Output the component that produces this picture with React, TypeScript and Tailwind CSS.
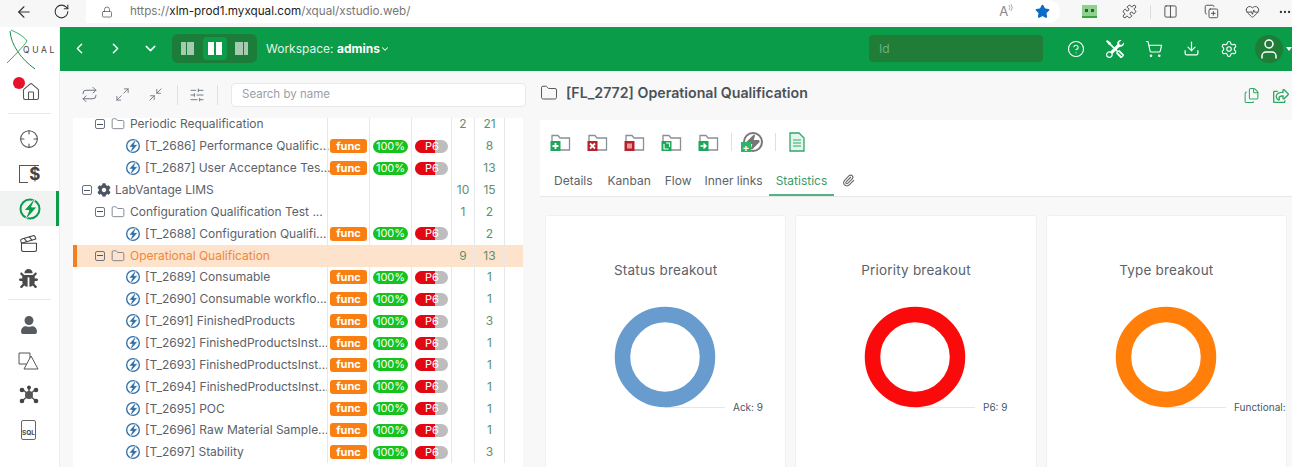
import {
  ArrowLeft,
  ChevronDown,
  ChevronLeft,
  ChevronRight,
  CircleHelp,
  Clapperboard,
  Download,
  Files,
  Folder,
  Home,
  Lock,
  Maximize2,
  Minimize2,
  MoreHorizontal,
  Paperclip,
  Puzzle,
  Repeat,
  RotateCw,
  Settings,
  ShoppingCart,
  SlidersHorizontal,
  Star,
  User,
  Columns2,
  CopyPlus,
  HeartPulse,
  Zap,
  Crosshair,
} from "lucide-react";
import { BsTools } from "react-icons/bs";
import { FaBug, FaCog, FaRegShareSquare, FaUser } from "react-icons/fa";

type Row = {
  name: string;
  level: 0 | 1 | 2;
  c1?: string;
  c2?: string;
  selected?: boolean;
};

const rows: Row[] = [
  { name: "Periodic Requalification", level: 1, c1: "2", c2: "21" },
  { name: "[T_2686] Performance Qualific...", level: 2, c2: "8" },
  { name: "[T_2687] User Acceptance Tes...", level: 2, c2: "13" },
  { name: "LabVantage LIMS", level: 0, c1: "10", c2: "15" },
  { name: "Configuration Qualification Test ...", level: 1, c1: "1", c2: "2" },
  { name: "[T_2688] Configuration Qualifi...", level: 2, c2: "2" },
  { name: "Operational Qualification", level: 1, c1: "9", c2: "13", selected: true },
  { name: "[T_2689] Consumable", level: 2, c2: "1" },
  { name: "[T_2690] Consumable workflo...", level: 2, c2: "1" },
  { name: "[T_2691] FinishedProducts", level: 2, c2: "3" },
  { name: "[T_2692] FinishedProductsInst...", level: 2, c2: "1" },
  { name: "[T_2693] FinishedProductsInst...", level: 2, c2: "1" },
  { name: "[T_2694] FinishedProductsInst...", level: 2, c2: "1" },
  { name: "[T_2695] POC", level: 2, c2: "1" },
  { name: "[T_2696] Raw Material Sample...", level: 2, c2: "1" },
  { name: "[T_2697] Stability", level: 2, c2: "3" },
];

function BoltCircle({ color, size }: { color: string; size: number }) {
  return (
    <svg width={size} height={size} viewBox="0 0 24 24" className="shrink-0">
      <circle cx="12" cy="12" r="9.5" fill="none" stroke={color} strokeWidth="2" />
      <path d="M18 0 6 13.500h5L6.500 24 19 10h-5.500z" fill={color} stroke="#fff" strokeWidth="0.800" />
    </svg>
  );
}

function MinusBox() {
  return (
    <span className="flex h-[10px] w-[10px] shrink-0 items-center justify-center rounded-[2px] border border-[#6b7280]">
      <span className="h-px w-[6px] bg-[#4b5563]" />
    </span>
  );
}

function TreeRow({ row, first }: { row: Row; first: boolean }) {
  const isTask = row.level === 2;
  return (
    <div
      className={`relative flex items-stretch ${first ? "h-[17.4px]" : "h-[21.87px]"} ${
        row.selected ? "bg-[#fde3cb]" : ""
      }`}
    >
      {row.selected && <span className="absolute left-0 top-0 h-full w-[4px] bg-[#f47f1f]" />}
      <div
        className={`flex w-[254px] items-center whitespace-nowrap text-[12px] ${first ? "pb-[5px]" : ""} ${
          row.selected ? "text-[#f0883a]" : "text-[#5c6269]"
        } ${row.level === 0 ? "pl-[9px]" : row.level === 1 ? "pl-[22px]" : "pl-[52px]"}`}
      >
        {row.level === 0 && <MinusBox />}
        {row.level === 0 && <FaCog className="ml-[5px] mr-[4px] shrink-0 text-[14px] text-[#4b5563]" />}
        {row.level === 1 && <MinusBox />}
        {row.level === 1 && <Folder className="ml-[6px] mr-[5px] shrink-0 text-[#6b7280]" size={14} strokeWidth={1.4} />}
        {isTask && <BoltCircle color="#2f6fa8" size={16} />}
        <span className={isTask ? "ml-[4px]" : ""}>{row.name}</span>
      </div>
      <div className="flex w-[42px] items-center border-l border-[#e5e7eb] pl-[2px]">
        {isTask && (
          <span className="flex h-[14px] w-[37px] items-center justify-center rounded-[3px] bg-[#f97f12] text-[11px] font-bold leading-none text-white">
            func
          </span>
        )}
      </div>
      <div className="flex w-[42px] items-center border-l border-[#e5e7eb] pl-[3px]">
        {isTask && (
          <span className="flex h-[13px] w-[35px] items-center justify-center rounded-full bg-[#18c21c] text-[11px] leading-none text-white">
            100%
          </span>
        )}
      </div>
      <div className="flex w-[40px] items-center border-l border-[#e5e7eb] pl-[3px]">
        {isTask && (
          <span className="relative flex h-[13px] w-[33px] overflow-hidden rounded-full bg-[#bdbdbd]">
            <span className="h-full w-[20px] bg-[#e30613]" />
            <span className="absolute left-[10px] top-0 text-[11px] leading-[13px] text-white">P6</span>
          </span>
        )}
      </div>
      <div
        className={`flex w-[23px] items-center justify-center border-l border-[#e5e7eb] text-[12px] text-[#5d8f70] ${
          first ? "pb-[5px]" : ""
        }`}
      >
        {row.c1}
      </div>
      <div
        className={`flex w-[30px] items-center justify-center border-l border-[#e5e7eb] text-[12px] text-[#5d8f70] ${
          first ? "pb-[5px]" : ""
        }`}
      >
        {row.c2}
      </div>
      <div className="w-[19px] border-l border-[#e5e7eb]" />
    </div>
  );
}

function FolderAction({ badge, mark }: { badge: string; mark: "plus" | "x" | "square" | "copy" | "arrow" }) {
  return (
    <svg width="22" height="20" viewBox="0 0 22 20" className="shrink-0">
      <path d="M2 9V3.500h6l2 2.500h9.500v12H9" fill="none" stroke="#8a8f94" strokeWidth="1.300" />
      <rect x="0.500" y="9" width="10" height="10" fill={badge} />
      {mark === "plus" && <path d="M5.500 11v6M2.500 14h6" stroke="#fff" strokeWidth="1.800" />}
      {mark === "x" && <path d="M3 11.500l5 5M8 11.500l-5 5" stroke="#fff" strokeWidth="1.800" />}
      {mark === "square" && <rect x="3" y="11.500" width="5" height="5" fill="#e79a9a" />}
      {mark === "copy" && <path d="M3 12v5h4.500M5 11h3.500v4" fill="none" stroke="#fff" strokeWidth="1.100" />}
      {mark === "arrow" && <path d="M2.500 14h5M5.500 11.500 8 14l-2.500 2.500" fill="none" stroke="#fff" strokeWidth="1.500" />}
    </svg>
  );
}

function Donut({ title, color, label }: { title: string; color: string; label: string }) {
  return (
    <div className="h-[260px] flex-1 overflow-hidden rounded-[3px] border border-[#f1f1f1] bg-white">
      <div className="pt-[44px] text-center text-[13.500px] leading-[20px] tracking-[0.2px] text-[#5c6269]">{title}</div>
      <svg width="239" height="140" viewBox="0 0 239 140" className="mt-[7px] block">
        <path d="M119 120.500H179" stroke="#e5e7eb" strokeWidth="1" />
        <circle cx="119" cy="70" r="42.500" fill="none" stroke={color} strokeWidth="15.500" />
        <text x="187" y="124" fontSize="10" fill="#4b5563">
          {label}
        </text>
      </svg>
    </div>
  );
}

function NavIcon({ children, active }: { children: React.ReactNode; active?: boolean }) {
  return (
    <div
      className={`flex h-[35px] items-center justify-center ${
        active ? "border-r-[3px] border-[#0a9c48] bg-[#f1f3f2] pl-[3px]" : "pr-[2px]"
      }`}
    >
      {children}
    </div>
  );
}

export default function App() {
  return (
    <div className="flex h-[467px] w-[1292px] flex-col overflow-hidden bg-[#f8f8f8] font-['Inter',sans-serif]">
      {/* Browser chrome */}
      <div className="flex h-[27px] items-center bg-[#f7f7f7] pb-[4px] text-[#333]">
        <ArrowLeft size={18} strokeWidth={1.500} className="ml-[15px]" />
        <RotateCw size={17} strokeWidth={1.500} className="ml-[20px]" />
        <div className="ml-[16px] flex h-full w-[977px] items-center rounded-r-full bg-white pl-[15px] text-[11.700px]">
          <Lock size={12} strokeWidth={1.500} className="text-[#555]" />
          <span className="ml-[17px] text-[#777]">https://</span>
          <span className="text-[#222]">xlm-prod1.myxqual.com</span>
          <span className="text-[#777]">/xqual/xstudio.web/</span>
          <span className="ml-auto text-[13px] text-[#888]">A</span>
          <svg width="6" height="10" viewBox="0 0 6 10" className="mb-[5px] mr-[21px]">
            <path d="M1 1a4 4 0 0 1 0 5M3 0a6 6 0 0 1 0 7" fill="none" stroke="#999" strokeWidth="0.800" />
          </svg>
          <Star size={15} fill="#0b6bc9" className="mr-[10px] text-[#0b6bc9]" />
        </div>
        <span className="ml-[22px] flex h-[13px] w-[15px] items-center justify-center gap-[3px] border-b-2 border-[#3aa53e] bg-[#8ed08f]">
          <span className="h-[3px] w-[3px] bg-[#1d6b20]" />
          <span className="h-[3px] w-[3px] bg-[#1d6b20]" />
        </span>
        <Puzzle size={15} strokeWidth={1.500} className="ml-[25px]" />
        <span className="ml-[13px] h-[14px] w-px bg-[#ddd]" />
        <Columns2 size={15} strokeWidth={1.300} className="ml-[12px]" />
        <CopyPlus size={15} strokeWidth={1.300} className="ml-[26px]" />
        <HeartPulse size={15} strokeWidth={1.300} className="ml-[26px]" />
        <MoreHorizontal size={14} className="ml-[18px]" />
      </div>

      <div className="flex min-h-0 flex-1">
        {/* Sidebar */}
        <div className="flex w-[60px] shrink-0 flex-col border-r border-[#eeeeee] bg-white">
          <div className="flex h-[43px] items-center">
            <svg width="32" height="43" viewBox="0 0 32 43" className="ml-[7px] shrink-0">
              <path d="M3 4C4 18 14 32 28 42" fill="none" stroke="#1f8a4c" strokeWidth="1" />
              <path d="M0 36C8 28 16 20 20 14 16 8 8 5 4 3" fill="none" stroke="#3aa76a" strokeWidth="1" />
            </svg>
            <span className="-ml-[16px] mt-[3px] text-[8.500px] leading-none tracking-[2.700px] text-[#444]">QUAL</span>
          </div>
          <div className="relative mx-[8px] flex h-[44px] items-center justify-center border-b border-[#e8e8e8]">
            <Home size={20} strokeWidth={1.300} className="ml-[2px] text-[#555]" />
            <span className="absolute left-[5px] top-[7px] h-[12px] w-[12px] rounded-full bg-[#e8112d]" />
          </div>
          <div className="mt-[7px] flex flex-col">
            <NavIcon>
              <Crosshair size={20} strokeWidth={1.300} className="text-[#555]" />
            </NavIcon>
            <NavIcon>
              <span className="relative flex h-[18px] w-[20px] items-center justify-end border-b border-l border-t border-[#555] text-[17px] font-bold leading-none text-[#444]">
                <span className="absolute -right-[2px] top-0 bg-white pl-[1px]">$</span>
              </span>
            </NavIcon>
            <NavIcon active>
              <BoltCircle color="#0a9c48" size={24} />
            </NavIcon>
            <NavIcon>
              <Clapperboard size={20} strokeWidth={1.300} className="text-[#444]" />
            </NavIcon>
            <NavIcon>
              <FaBug size={19} className="text-[#4b4b4b]" />
            </NavIcon>
          </div>
          <div className="mx-[8px] mt-[3px] border-b border-[#e8e8e8]" />
          <div className="mt-[7px] flex flex-col">
            <NavIcon>
              <FaUser size={18} className="text-[#555b61]" />
            </NavIcon>
            <NavIcon>
              <svg width="21" height="20" viewBox="0 0 21 20" className="mt-[2px]">
                <path d="M9 13H1V2h11v5" fill="none" stroke="#555" strokeWidth="1" />
                <path d="M13 5 20 18H6z" fill="#fff" stroke="#555" strokeWidth="1" />
              </svg>
            </NavIcon>
            <NavIcon>
              <svg width="20" height="20" viewBox="0 0 20 20">
                <path d="M10 10 3 4M10 10l7-6M10 10 3 16M10 10l7 6M10 10V2" stroke="#555" strokeWidth="1.500" />
                <circle cx="10" cy="10" r="4" fill="#555" />
                <circle cx="3" cy="5" r="2.300" fill="#444" />
                <circle cx="17" cy="5" r="2.300" fill="#444" />
                <circle cx="3" cy="16" r="2.300" fill="#444" />
                <circle cx="17" cy="16" r="2.300" fill="#444" />
                <circle cx="10" cy="2.500" r="2" fill="#444" />
              </svg>
            </NavIcon>
            <NavIcon>
              <span className="flex h-[20px] w-[15px] items-end justify-center rounded-[2px] border border-[#666] pb-[2px] text-[6.500px] font-bold leading-none text-[#444]">
                SQL
              </span>
            </NavIcon>
          </div>
        </div>

        <div className="flex min-w-0 flex-1 flex-col">
          {/* Green header */}
          <div className="flex h-[44px] shrink-0 items-center bg-[#0a9c48] pb-[1px] text-white">
            <ChevronLeft size={17} strokeWidth={2} className="ml-[11px]" />
            <ChevronRight size={17} strokeWidth={2} className="ml-[19px]" />
            <ChevronDown size={17} strokeWidth={2} className="ml-[18px]" />
            <div className="ml-[13px] flex h-[29px] w-[85px] items-center justify-between rounded-[6px] bg-[#1c7d3a] px-[3px]">
              <span className="flex h-[23px] w-[25px] items-center justify-center gap-px">
                <span className="h-[13px] w-[5px] bg-white/60" />
                <span className="h-[13px] w-[7px] bg-white/60" />
              </span>
              <span className="flex h-[23px] w-[24px] items-center justify-center gap-[2px] rounded-[4px] bg-[#0a9c48]">
                <span className="h-[13px] w-[6px] bg-white" />
                <span className="h-[13px] w-[6px] bg-white" />
              </span>
              <span className="flex h-[23px] w-[25px] items-center justify-center gap-px">
                <span className="h-[13px] w-[8px] bg-white/60" />
                <span className="h-[13px] w-[4px] bg-white/60" />
              </span>
            </div>
            <span className="ml-[9px] text-[12px] text-[#e3f4ea]">
              Workspace: <b className="font-bold text-white">admins</b>
            </span>
            <ChevronDown size={10} strokeWidth={2.500} />
            <div className="ml-auto flex h-[27px] w-[174px] items-center rounded-[4px] bg-[#1f7d38] pl-[10px] text-[12px] text-[#6fae82]">
              Id
            </div>
            <CircleHelp size={18} strokeWidth={1.500} className="ml-[24px]" />
            <BsTools size={18} className="ml-[21px]" />
            <ShoppingCart size={18} strokeWidth={1.500} className="ml-[21px]" />
            <Download size={17} strokeWidth={1.700} className="ml-[20px]" />
            <Settings size={18} strokeWidth={1.500} className="ml-[20px]" />
            <span className="ml-[17px] flex h-[28px] w-[28px] shrink-0 items-center justify-center rounded-full bg-[#1f7d38]">
              <User size={24} strokeWidth={1.500} />
            </span>
            <span className="ml-[3px] mr-0 h-0 w-0 border-x-[3px] border-t-[4px] border-x-transparent border-t-white" />
          </div>

          <div className="flex min-h-0 flex-1">
            {/* Tree pane */}
            <div className="flex w-[480px] shrink-0 flex-col pl-[13px]">
              <div className="flex h-[47px] shrink-0 items-center text-[#6b7280]">
                <Repeat size={17} strokeWidth={1.400} className="ml-[8px]" />
                <Maximize2 size={15} strokeWidth={1.400} className="ml-[17px]" />
                <Minimize2 size={15} strokeWidth={1.400} className="ml-[18px]" />
                <span className="ml-[14px] h-[20px] w-px bg-[#e0e0e0]" />
                <SlidersHorizontal size={16} strokeWidth={1.400} className="ml-[11px]" />
                <span className="ml-[12px] h-[20px] w-px bg-[#e0e0e0]" />
                <div className="ml-[13px] flex h-[24px] w-[295px] items-center rounded-[4px] border border-[#e8e8e8] bg-white pl-[10px] text-[11.500px] text-[#9aa0a6]">
                  Search by name
                </div>
              </div>
              <div className="min-h-0 w-[450px] flex-1 bg-white">
                {rows.map((row, i) => (
                  <TreeRow key={row.name + row.c2} row={row} first={i === 0} />
                ))}
              </div>
            </div>

            {/* Detail pane */}
            <div className="flex min-w-0 flex-1 flex-col">
              <div className="flex h-[49px] shrink-0 items-center pr-[3px]">
                <Folder size={18} strokeWidth={1.300} className="mb-[5px] text-[#555]" />
                <span className="mb-[5px] ml-[8px] text-[14.200px] font-semibold text-[#4b5258]">
                  [FL_2772] Operational Qualification
                </span>
                <Files size={17} strokeWidth={1.500} className="ml-auto text-[#2fa866]" />
                <FaRegShareSquare size={16} className="ml-[13px] text-[#2fa866]" />
              </div>
              <div className="shrink-0 bg-white">
                <div className="flex h-[47px] items-center pb-[4px] pl-[10px]">
                  <FolderAction badge="#1ea75b" mark="plus" />
                  <span className="ml-[15px]" />
                  <FolderAction badge="#b4232c" mark="x" />
                  <span className="ml-[15px]" />
                  <FolderAction badge="#b4232c" mark="square" />
                  <span className="ml-[15px]" />
                  <FolderAction badge="#1ea75b" mark="copy" />
                  <span className="ml-[15px]" />
                  <FolderAction badge="#1ea75b" mark="arrow" />
                  <span className="ml-[11px] h-[18px] w-px bg-[#e0e0e0]" />
                  <span className="relative ml-[11px] flex h-[20px] w-[20px] items-center justify-center rounded-full border-2 border-[#777]">
                    <Zap size={16} fill="#777" className="text-[#777]" />
                    <span className="absolute -bottom-[2px] -left-[4px] flex h-[10px] w-[10px] items-center justify-center bg-[#2fb56b] text-[10px] font-bold leading-none text-white">
                      +
                    </span>
                  </span>
                  <span className="ml-[12px] h-[18px] w-px bg-[#e0e0e0]" />
                  <svg width="16" height="20" viewBox="0 0 16 20" className="ml-[13px]">
                    <path d="M1 1h9l5 5v13H1z" fill="#e5f6ec" stroke="#2fa866" strokeWidth="1.300" />
                    <path d="M4 8h8M4 11h8M4 14h8" stroke="#2fa866" strokeWidth="1.200" />
                  </svg>
                </div>
                <div className="flex h-[30px] items-stretch border-b border-[#e5e7eb] pb-[2px] pl-[6px] text-[12px] text-[#5c6269]">
                  <span className="flex items-center px-[8px]">Details</span>
                  <span className="flex items-center px-[7px]">Kanban</span>
                  <span className="flex items-center pl-[7px] pr-[8px]">Flow</span>
                  <span className="flex items-center px-[5px]">Inner links</span>
                  <span className="relative ml-[1px] flex items-center px-[7px] text-[#3a9c6c]">
                    Statistics
                    <span className="absolute -bottom-[2px] left-0 h-[2px] w-full bg-[#55b283]" />
                  </span>
                  <Paperclip size={13} className="ml-[8px] self-center text-[#666]" />
                </div>
              </div>
              <div className="flex gap-[9px] pl-[5px] pr-[5px] pt-[18px]">
                <Donut title="Status breakout" color="#689ccf" label="Ack: 9" />
                <Donut title="Priority breakout" color="#fa0a0a" label="P6: 9" />
                <Donut title="Type breakout" color="#ff7f0a" label="Functional:" />
              </div>
            </div>
          </div>
        </div>
      </div>
    </div>
  );
}
